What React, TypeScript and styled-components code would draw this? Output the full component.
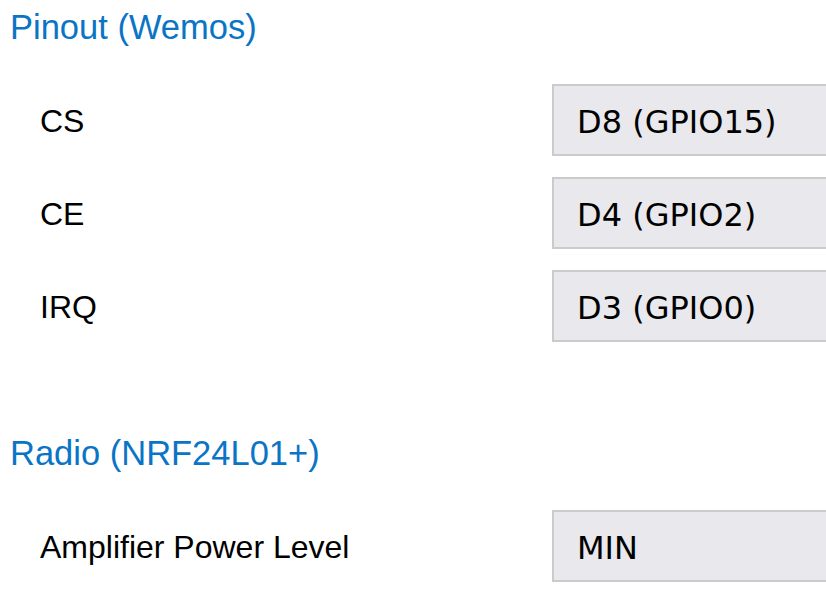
import React from "react";
import styled, { createGlobalStyle } from "styled-components";

const Global = createGlobalStyle`
  html, body {
    margin: 0;
    padding: 0;
    background: #ffffff;
    overflow: hidden;
  }
  body {
    font-family: "Liberation Sans", Arial, sans-serif;
  }
`;

const Page = styled.div`
  display: flex;
  flex-direction: column;
  width: 826px;
  height: 596px;
  overflow: hidden;
`;

const Heading = styled.h2<{ $top: number }>`
  margin: ${(p) => p.$top}px 0 0 10px;
  font-family: "Liberation Sans", Arial, sans-serif;
  font-weight: normal;
  font-size: 34.5px;
  line-height: 39px;
  color: #0a74c6;
`;

const Rows = styled.div<{ $top: number }>`
  display: flex;
  flex-direction: column;
  gap: 21px;
  margin-top: ${(p) => p.$top}px;
`;

const Row = styled.div`
  display: flex;
  align-items: center;
  height: 72px;
`;

const Label = styled.div`
  flex: 0 0 auto;
  width: 512px;
  padding: 3px 0 0 40px;
  font-size: 32px;
  color: #000000;
`;

const Value = styled.div`
  flex: 0 0 auto;
  box-sizing: border-box;
  width: 320px;
  height: 72px;
  display: flex;
  align-items: center;
  padding: 3px 0 0 23px;
  background: #e9e8ed;
  border: 2px solid #cbcbcb;
  font-family: "DejaVu Sans", Verdana, sans-serif;
  font-size: 32px;
  color: #000000;
`;

const pinout = [
  { label: "CS", value: "D8 (GPIO15)" },
  { label: "CE", value: "D4 (GPIO2)" },
  { label: "IRQ", value: "D3 (GPIO0)" },
];

const radio = [{ label: "Amplifier Power Level", value: "MIN" }];

export default function App() {
  return (
    <Page>
      <Global />
      <Heading $top={8}>Pinout (Wemos)</Heading>
      <Rows $top={37}>
        {pinout.map((r) => (
          <Row key={r.label}>
            <Label>{r.label}</Label>
            <Value>{r.value}</Value>
          </Row>
        ))}
      </Rows>
      <Heading $top={92}>Radio (NRF24L01+)</Heading>
      <Rows $top={37}>
        {radio.map((r) => (
          <Row key={r.label}>
            <Label>{r.label}</Label>
            <Value>{r.value}</Value>
          </Row>
        ))}
      </Rows>
    </Page>
  );
}
